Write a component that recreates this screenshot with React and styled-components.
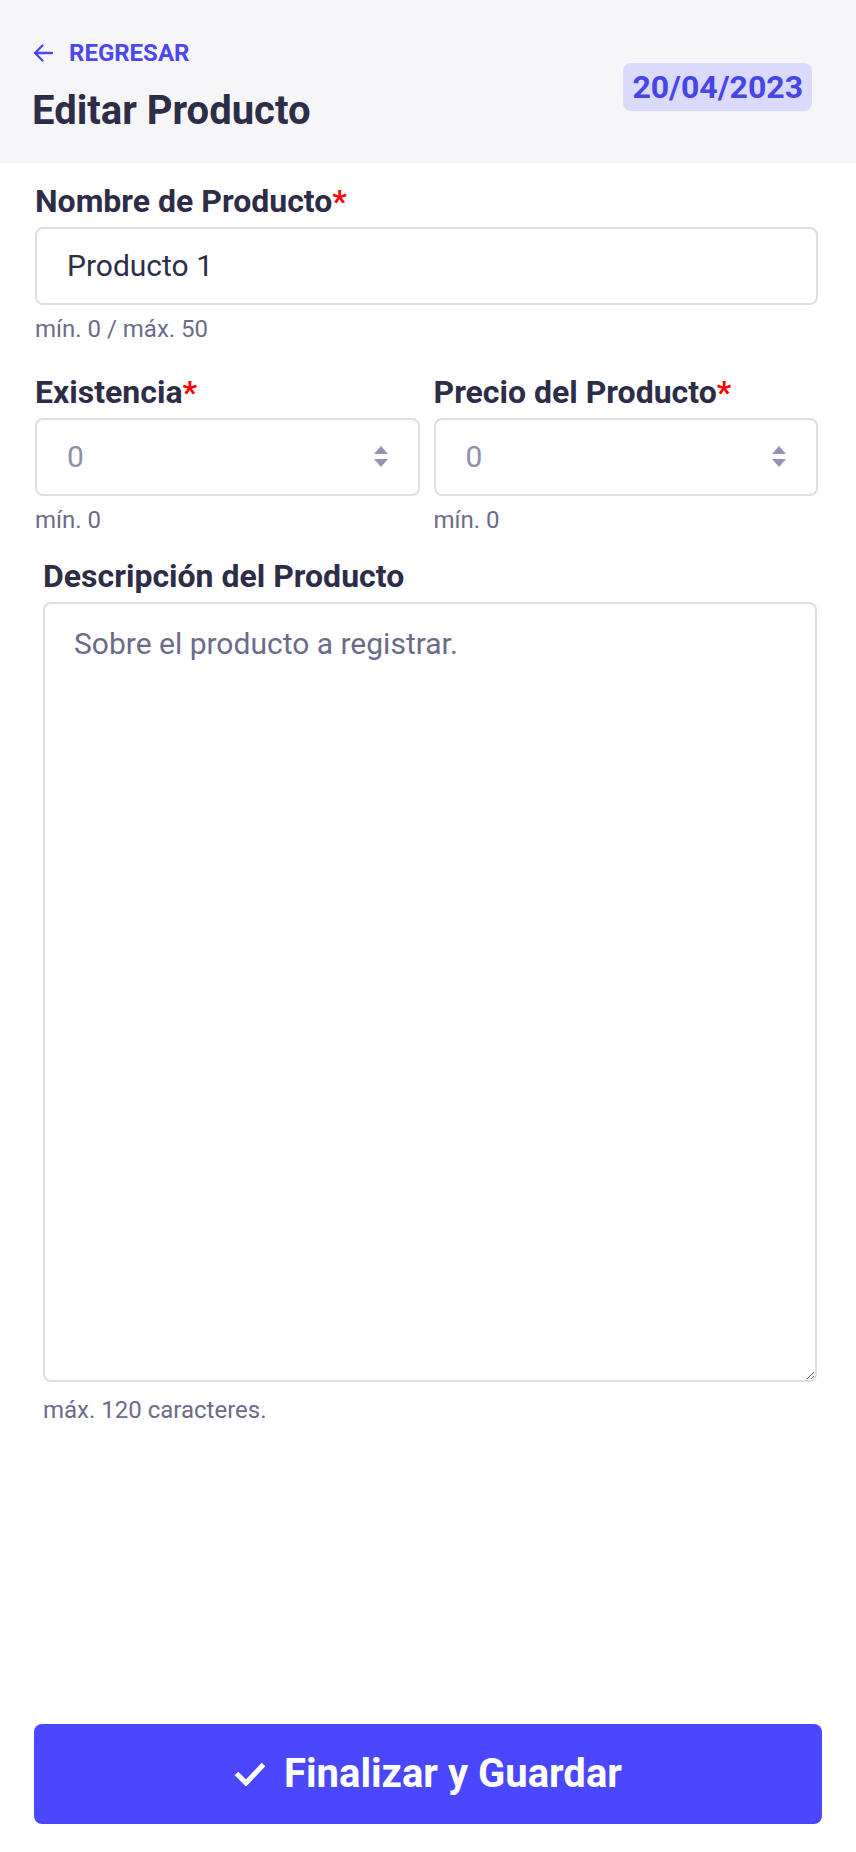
import React from "react";
import styled, { createGlobalStyle } from "styled-components";

const GlobalStyle = createGlobalStyle`
  html, body { margin: 0; padding: 0; background: #ffffff; }
  body { font-family: Roboto, "Noto Sans", sans-serif; -webkit-font-smoothing: antialiased; }
  *, *::before, *::after { box-sizing: border-box; }
`;

const Page = styled.div`
  min-height: 100vh;
  display: flex;
  flex-direction: column;
  background: #ffffff;
`;

const Header = styled.header`
  background: #f6f6f8;
  display: flex;
  align-items: center;
  justify-content: space-between;
  padding: 39px 44px 28px 31px;
`;

const HeaderLeft = styled.div`
  display: flex;
  flex-direction: column;
`;

const BackLink = styled.a`
  display: flex;
  align-items: center;
  gap: 16px;
  color: #4b48f2;
  font: 700 24px/28px Roboto, sans-serif;
  text-transform: uppercase;
  text-decoration: none;
  padding-left: 2px;
`;

const Title = styled.h1`
  margin: 20px 0 0;
  font: 700 40px/48px Roboto, sans-serif;
  color: #2e2d47;
  padding-left: 1px;
`;

const DateBadge = styled.div`
  background: #dbdafd;
  color: #4744e8;
  font: 700 32px/48px Roboto, sans-serif;
  padding: 0 9px;
  border-radius: 8px;
`;

const Form = styled.form`
  display: flex;
  flex-direction: column;
  padding: 18px 38px 0 35px;
`;

const Field = styled.div`
  display: flex;
  flex-direction: column;
  min-width: 0;
  margin-top: ${(p) => p.$top || 0}px;
  margin-left: ${(p) => p.$indent || 0}px;
  margin-right: ${(p) => p.$indentRight || 0}px;
`;

const Label = styled.label`
  font: 700 32px/40px Roboto, sans-serif;
  color: #2e2d47;
  margin-bottom: 6px;
`;

const Required = styled.span`
  color: #ff0000;
`;

const InputBox = styled.div`
  height: 78px;
  border: 2px solid #dddde6;
  border-radius: 8px;
  background: #ffffff;
  display: flex;
  align-items: center;
  padding: 0 30px 0 30px;
`;

const TextInput = styled.input`
  flex: 1;
  min-width: 0;
  border: none;
  outline: none;
  background: transparent;
  padding: 0;
  font: 400 30px/36px Roboto, sans-serif;
  color: #2e2d47;

  &::placeholder {
    color: #8f8eab;
  }
`;

const Helper = styled.div`
  font: 400 24px/32px Roboto, sans-serif;
  color: #6c6b89;
  margin-top: ${(p) => p.$top || 8}px;
`;

const Row = styled.div`
  display: grid;
  grid-template-columns: 1fr 1fr;
  gap: 14px;
  margin-top: 27px;
`;

const TextArea = styled.textarea`
  width: 100%;
  height: 780px;
  border: 2px solid #dddde6;
  border-radius: 8px;
  padding: 17px 29px;
  font: 400 30px/45px Roboto, sans-serif;
  color: #2e2d47;
  resize: vertical;
  outline: none;
  display: block;

  &::placeholder {
    color: #6c6b89;
  }
`;

const Footer = styled.div`
  margin-top: auto;
  padding: 0 34px 28px 34px;
`;

const SaveButton = styled.button`
  width: 100%;
  height: 100px;
  border: none;
  border-radius: 8px;
  background: #4a47ff;
  color: #ffffff;
  font: 700 40px/1 Roboto, sans-serif;
  display: flex;
  align-items: center;
  justify-content: center;
  gap: 18px;
  cursor: pointer;
`;

const ArrowLeft = () => (
  <svg width="20" height="18" viewBox="0 0 20 18" fill="none">
    <path
      d="M19 9H2M9.5 1.5L2 9l7.5 7.5"
      stroke="currentColor"
      strokeWidth="2.4"
      strokeLinecap="round"
      strokeLinejoin="round"
    />
  </svg>
);

const Spinner = () => (
  <svg width="14" height="22" viewBox="0 0 14 22">
    <path d="M7 0L14 8H0z" fill="#9493b0" />
    <path d="M0 13h14L7 21z" fill="#9493b0" />
  </svg>
);

const CheckIcon = () => (
  <svg width="32" height="24" viewBox="0 0 32 24" fill="none">
    <path
      d="M2.5 11.5l9.5 9.5L29.5 2.5"
      stroke="#ffffff"
      strokeWidth="5"
      strokeLinecap="butt"
      strokeLinejoin="miter"
    />
  </svg>
);

export default function App() {
  return (
    <Page>
      <GlobalStyle />
      <Header>
        <HeaderLeft>
          <BackLink href="#">
            <ArrowLeft />
            Regresar
          </BackLink>
          <Title>Editar Producto</Title>
        </HeaderLeft>
        <DateBadge>20/04/2023</DateBadge>
      </Header>

      <Form onSubmit={(e) => e.preventDefault()}>
        <Field>
          <Label>
            Nombre de Producto<Required>*</Required>
          </Label>
          <InputBox>
            <TextInput defaultValue="Producto 1" />
          </InputBox>
          <Helper>mín. 0 / máx. 50</Helper>
        </Field>

        <Row>
          <Field>
            <Label>
              Existencia<Required>*</Required>
            </Label>
            <InputBox>
              <TextInput placeholder="0" />
              <Spinner />
            </InputBox>
            <Helper>mín. 0</Helper>
          </Field>
          <Field>
            <Label>
              Precio del Producto<Required>*</Required>
            </Label>
            <InputBox>
              <TextInput placeholder="0" />
              <Spinner />
            </InputBox>
            <Helper>mín. 0</Helper>
          </Field>
        </Row>

        <Field $top={20} $indent={8} $indentRight={1}>
          <Label>Descripción del Producto</Label>
          <TextArea placeholder="Sobre el producto a registrar." />
          <Helper $top={12}>máx. 120 caracteres.</Helper>
        </Field>
      </Form>

      <Footer>
        <SaveButton type="button">
          <CheckIcon />
          Finalizar y Guardar
        </SaveButton>
      </Footer>
    </Page>
  );
}
